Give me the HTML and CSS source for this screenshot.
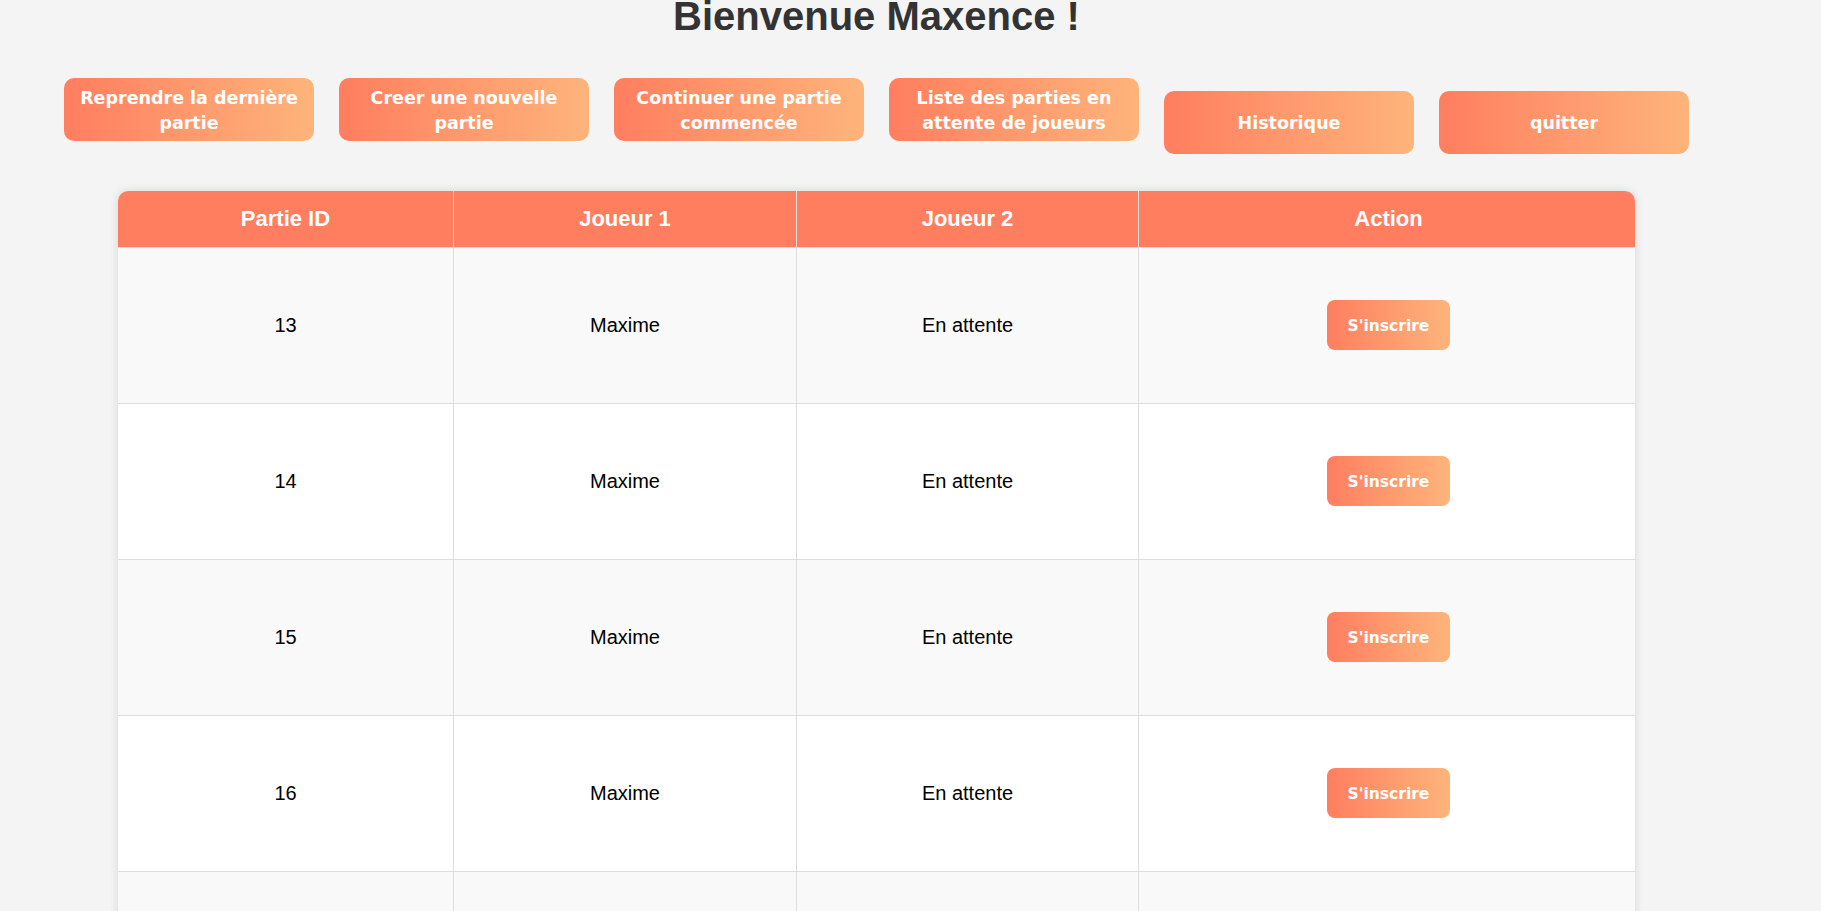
FILE: index.html
```html
<!DOCTYPE html>
<html lang="fr">
<head>
<meta charset="utf-8">
<title>Accueil</title>
<link rel="stylesheet" href="styles.css">
</head>
<body>
<div class="page">
  <h1 class="title">Bienvenue Maxence !</h1>
  <nav class="menu">
    <a class="menu-btn">Reprendre la dernière partie</a>
    <a class="menu-btn">Creer une nouvelle partie</a>
    <a class="menu-btn">Continuer une partie commencée</a>
    <a class="menu-btn">Liste des parties en attente de joueurs</a>
    <a class="menu-btn">Historique</a>
    <a class="menu-btn">quitter</a>
  </nav>
  <div class="table-wrap">
    <table class="games">
      <tr class="head">
        <th class="c1">Partie ID</th>
        <th class="c2">Joueur 1</th>
        <th class="c3">Joueur 2</th>
        <th class="c4">Action</th>
      </tr>
      <tr>
        <td>13</td><td>Maxime</td><td>En attente</td>
        <td><a class="join-btn">S'inscrire</a></td>
      </tr>
      <tr>
        <td>14</td><td>Maxime</td><td>En attente</td>
        <td><a class="join-btn">S'inscrire</a></td>
      </tr>
      <tr>
        <td>15</td><td>Maxime</td><td>En attente</td>
        <td><a class="join-btn">S'inscrire</a></td>
      </tr>
      <tr>
        <td>16</td><td>Maxime</td><td>En attente</td>
        <td><a class="join-btn">S'inscrire</a></td>
      </tr>
      <tr>
        <td>17</td><td>Maxime</td><td>En attente</td>
        <td><a class="join-btn">S'inscrire</a></td>
      </tr>
    </table>
  </div>
</div>
</body>
</html>
```
FILE: styles.css
```css
html, body {
  margin: 0;
  padding: 0;
}

body {
  background: #f4f4f4;
  font-family: "Liberation Sans", Arial, sans-serif;
  color: #000;
  overflow: hidden;
}

.page {
  width: 1753px;
}

.title {
  margin: -6px 0 39px;
  text-align: center;
  font-size: 40px;
  font-weight: bold;
  color: #333;
}

.menu {
  display: flex;
  justify-content: center;
  align-items: last baseline;
  gap: 25px;
}

.menu-btn {
  box-sizing: border-box;
  width: 250px;
  height: 63px;
  padding: 3px 10px 0;
  display: flex;
  align-items: center;
  justify-content: center;
  text-align: center;
  border-radius: 10px;
  background: linear-gradient(to right, #ff7e5f, #feb47b);
  color: #fff;
  font-family: Tahoma, "DejaVu Sans", sans-serif;
  font-weight: bold;
  font-size: 17.5px;
  line-height: 25px;
  text-decoration: none;
}

.table-wrap {
  width: 1517px;
  margin: 37px auto 0;
  border-radius: 10px 10px 0 0;
  overflow: hidden;
  box-shadow: 0 0 10px rgba(0, 0, 0, 0.12);
  background: #fff;
}

.games {
  width: 100%;
  border-collapse: collapse;
  border-style: hidden;
  table-layout: fixed;
}

.games th,
.games td {
  border: 1px solid #ddd;
  text-align: center;
}

.games th {
  height: 56px;
  padding: 0;
  background: #ff7e5f;
  color: #fff;
  font-size: 22px;
  font-weight: bold;
}

.games td {
  height: 155px;
  padding: 0;
  font-size: 20px;
}

.games tr:nth-child(even) td {
  background: #f9f9f9;
}

.games tr:nth-child(odd) td {
  background: #fff;
}

.c1 { width: 335px; }
.c2 { width: 342px; }
.c3 { width: 341px; }
.c4 { width: 499px; }

.join-btn {
  display: inline-flex;
  align-items: center;
  justify-content: center;
  box-sizing: border-box;
  height: 50px;
  padding: 2px 21px 0;
  border-radius: 8px;
  background: linear-gradient(to right, #ff7e5f, #feb47b);
  color: #fff;
  font-family: Tahoma, "DejaVu Sans", sans-serif;
  font-weight: bold;
  font-size: 15.5px;
  text-decoration: none;
  vertical-align: middle;
}
```
